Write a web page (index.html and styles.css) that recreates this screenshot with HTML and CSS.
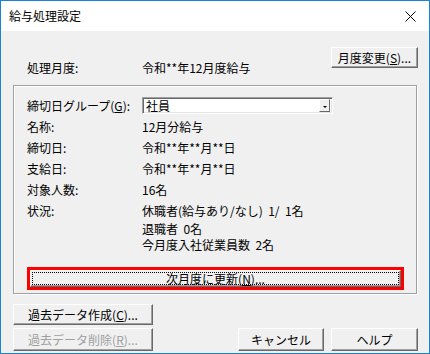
FILE: index.html
```html
<!DOCTYPE html>
<html lang="ja">
<head>
  <meta charset="UTF-8" />
  <title>給与処理設定</title>
  <link rel="stylesheet" href="styles.css">
</head>
<body>

  <div class="window">
    <div class="titlebar">
      <span class="title">給与処理設定</span>
      <svg class="close" width="11" height="11" viewBox="0 0 11 11">
        <path d="M0.5 0.5 L10.5 10.5 M10.5 0.5 L0.5 10.5" stroke="#000" stroke-width="1" fill="none" />
      </svg>
    </div>

    <div class="content">
      <div class="top-row">
        <span class="label">処理月度:</span>
        <span class="value">令和**年12月度給与</span>
        <button class="btn btn-month">月度変更(<u>S</u>)...</button>
      </div>

      <div class="group">
        <div class="rows">
          <span class="label">締切日グループ(<u>G</u>):</span>
          <div class="combo">
            <span class="combo-text">社員</span>
            <span class="combo-arrow"></span>
          </div>

          <span class="label">名称:</span>
          <span class="value">12月分給与</span>

          <span class="label">締切日:</span>
          <span class="value">令和**年**月**日</span>

          <span class="label">支給日:</span>
          <span class="value">令和**年**月**日</span>

          <span class="label">対象人数:</span>
          <span class="value">16名</span>

          <span class="label">状況:</span>
          <div class="value lines">
            <div class="first">休職者(給与あり/なし)  1/  1名</div>
            <div>退職者  0名</div>
            <div>今月度入社従業員数  2名</div>
          </div>
        </div>

        <div class="highlight">
          <button class="btn btn-next">次月度に更新(<u>N</u>)...</button>
        </div>
      </div>

      <div class="bottom">
        <div class="left-col">
          <button class="btn btn-past">過去データ作成(<u>C</u>)...</button>
          <button class="btn btn-past btn-disabled">過去データ削除(<u>R</u>)...</button>
        </div>
        <div class="right-col">
          <button class="btn btn-cancel">キャンセル</button>
          <button class="btn btn-help">ヘルプ</button>
        </div>
      </div>
    </div>
  </div>

</body>
</html>
```

FILE: styles.css
```css
* {
  margin: 0;
  padding: 0;
  box-sizing: border-box;
}

body {
  font-family: "Noto Sans CJK JP", "Noto Sans", sans-serif;
  font-size: 12px;
  color: #000;
  background: #f0f0f0;
}

.window {
  width: 430px;
  height: 354px;
  border: 1px solid #1883d7;
  background: #f0f0f0;
  overflow: hidden;
}

.titlebar {
  height: 30px;
  background: #ffffff;
  display: flex;
  align-items: center;
  justify-content: space-between;
  padding: 0 13px 0 8px;
}

.title {
  font-size: 12px;
  line-height: 14px;
}

.content {
  padding: 0 11px 0 12px;
}

u {
  text-decoration: underline;
  text-underline-offset: 1px;
}

/* top row */
.top-row {
  display: flex;
  align-items: flex-start;
  margin-top: 16px;
  height: 38px;
}

.top-row .label {
  width: 129px;
  padding-left: 14px;
  padding-top: 14px;
  line-height: 14px;
}

.top-row .value {
  padding-top: 14px;
  line-height: 14px;
}

/* buttons */
.btn {
  font-family: inherit;
  font-size: 12px;
  color: #000;
  background: #f0f0f0;
  border: 1px solid;
  border-color: #ffffff #696969 #696969 #ffffff;
  box-shadow: inset -1px -1px 0 #a0a0a0;
  line-height: 14px;
  cursor: default;
  position: relative;
}

.btn-month {
  margin-left: auto;
  width: 87px;
  height: 21px;
}

/* group box */
.group {
  width: 404px;
  height: 209px;
  border: 1px solid #a0a0a0;
  box-shadow: inset 1px 1px 0 #ffffff, 1px 1px 0 #ffffff;
  padding: 9px 0 0 13px;
}

.rows {
  display: grid;
  grid-template-columns: 115px 1fr;
  grid-auto-rows: auto;
  line-height: 21px;
}

.combo {
  width: 191px;
  height: 17px;
  margin-top: 2px;
  background: #ffffff;
  border: 1px solid;
  border-color: #a0a0a0 #ffffff #ffffff #a0a0a0;
  box-shadow: inset 1px 1px 0 #696969, inset -1px -1px 0 #e3e3e3;
  display: flex;
  align-items: center;
  justify-content: space-between;
  padding: 0 2px 0 3px;
}

.combo-text {
  line-height: 14px;
}

.combo-arrow {
  width: 11px;
  height: 13px;
  background: #f0f0f0;
  border: 1px solid;
  border-color: #ffffff #696969 #696969 #ffffff;
  display: flex;
  align-items: center;
  justify-content: center;
}

.combo-arrow::after {
  content: "";
  border-left: 2px solid transparent;
  border-right: 2px solid transparent;
  border-top: 2px solid #000;
  margin-top: 2px;
}

.lines div {
  line-height: 16px;
  white-space: pre;
}

.lines .first {
  line-height: 21px;
}

.highlight {
  width: 377px;
  margin-top: 14px;
  border: 3px solid #ff0000;
}

.btn-next {
  display: block;
  width: 100%;
  height: 17px;
}

.btn-next::after {
  content: "";
  position: absolute;
  top: 1px;
  left: 1px;
  right: 1px;
  bottom: 1px;
  border: 1px dotted #000;
}

/* bottom */
.bottom {
  display: flex;
  align-items: flex-end;
  margin-top: 10px;
}

.left-col {
  display: flex;
  flex-direction: column;
  gap: 3px;
}

.btn-past {
  width: 140px;
  height: 21px;
}

.btn-disabled {
  height: 23px;
  color: #a0a0a0;
}

.right-col {
  margin-left: auto;
  display: flex;
  gap: 7px;
}

.btn-cancel {
  width: 86px;
  height: 23px;
}

.btn-help {
  width: 87px;
  height: 23px;
}
```
